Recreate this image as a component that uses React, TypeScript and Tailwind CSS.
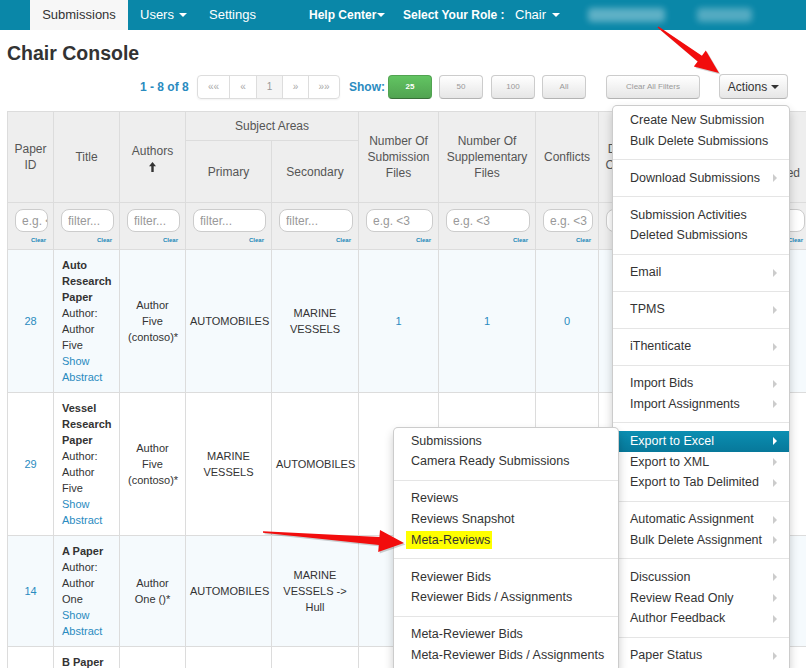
import React from 'react';

type Entry = { label: string; sub?: boolean; active?: boolean } | 'divider';

const actionsMenu: Entry[] = [
  { label: 'Create New Submission' },
  { label: 'Bulk Delete Submissions' },
  'divider',
  { label: 'Download Submissions', sub: true },
  'divider',
  { label: 'Submission Activities' },
  { label: 'Deleted Submissions' },
  'divider',
  { label: 'Email', sub: true },
  'divider',
  { label: 'TPMS', sub: true },
  'divider',
  { label: 'iThenticate', sub: true },
  'divider',
  { label: 'Import Bids', sub: true },
  { label: 'Import Assignments', sub: true },
  'divider',
  { label: 'Export to Excel', sub: true, active: true },
  { label: 'Export to XML', sub: true },
  { label: 'Export to Tab Delimited', sub: true },
  'divider',
  { label: 'Automatic Assignment', sub: true },
  { label: 'Bulk Delete Assignment', sub: true },
  'divider',
  { label: 'Discussion', sub: true },
  { label: 'Review Read Only', sub: true },
  { label: 'Author Feedback', sub: true },
  'divider',
  { label: 'Paper Status', sub: true },
];

const excelMenu: string[] = [
  'Submissions',
  'Camera Ready Submissions',
  'divider',
  'Reviews',
  'Reviews Snapshot',
  'Meta-Reviews',
  'divider',
  'Reviewer Bids',
  'Reviewer Bids / Assignments',
  'divider',
  'Meta-Reviewer Bids',
  'Meta-Reviewer Bids / Assignments',
];

const papers = [
  { id: 28, title: 'Auto Research Paper', author: 'Author Five', authors: 'Author Five (contoso)*', primary: 'AUTOMOBILES', secondary: 'MARINE VESSELS', bg: 'bg-[#f5fafd]' },
  { id: 29, title: 'Vessel Research Paper', author: 'Author Five', authors: 'Author Five (contoso)*', primary: 'MARINE VESSELS', secondary: 'AUTOMOBILES', bg: 'bg-white' },
  { id: 14, title: 'A Paper', author: 'Author One', authors: 'Author One ()*', primary: 'AUTOMOBILES', secondary: 'MARINE VESSELS -> Hull', bg: 'bg-[#f5fafd]' },
  { id: 15, title: 'B Paper', author: 'Author Two', authors: 'Author Two ()*', primary: 'AUTOMOBILES', secondary: 'MARINE VESSELS', bg: 'bg-white' },
];

const Divider = () => <div className="my-[7.65px] h-px bg-[#e5e5e5]" />;

const Th = ({ children, rowSpan, colSpan }: { children: React.ReactNode; rowSpan?: number; colSpan?: number }) => (
  <th rowSpan={rowSpan} colSpan={colSpan} className="border border-[#dcdcdc] bg-[#eeeeee] px-[4px] text-center align-middle text-[12px] font-normal leading-[16px] text-[#555]">
    {children}
  </th>
);

const FilterCell = ({ ph }: { ph: string }) => (
  <td className="border border-[#dcdcdc] bg-[#eeeeee] pl-[7px] pr-[5px] pt-[6px] pb-[2px] align-top">
    <input
      readOnly
      placeholder={ph}
      className="block h-[23px] w-full rounded-[8px] border border-[#cccccc] bg-white pl-[6px] text-[12px] outline-none placeholder:text-[#999]"
    />
    <div className="mt-[3px] pr-[2px] text-right text-[6px] font-bold leading-[10px] text-[#1b88b8]">Clear</div>
  </td>
);

function Nav() {
  return (
    <div className="flex h-[30px] items-stretch bg-[#0a87a8] text-[13px] text-white">
      <div className="w-[30px]" />
      <div className="flex w-[98px] items-center justify-center bg-[#f7f7f7] text-[#333]">Submissions</div>
      <div className="flex w-[81px] items-center pl-[12px]">
        Users
        <span className="ml-[5px] h-0 w-0 border-x-[4px] border-t-[4px] border-x-transparent border-t-white" />
      </div>
      <div className="flex w-[100px] items-center">Settings</div>
      <div className="flex w-[94px] items-center text-[12px] font-bold">
        Help Center
        <span className="ml-[1px] h-0 w-0 border-x-[4px] border-t-[4px] border-x-transparent border-t-white" />
      </div>
      <div className="flex w-[112px] items-center text-[12px] font-bold">Select Your Role :</div>
      <div className="flex w-[73px] items-center">
        Chair
        <span className="ml-[6px] h-0 w-0 border-x-[4px] border-t-[4px] border-x-transparent border-t-white" />
      </div>
      <div className="flex items-center">
        <div className="h-[14px] w-[77px] rounded bg-white/35 blur-[3px]" />
        <div className="ml-[32px] h-[14px] w-[55px] rounded bg-white/30 blur-[3px]" />
      </div>
    </div>
  );
}

function Controls() {
  const grayBtn = 'flex h-[24px] w-[44px] items-center justify-center rounded-[4px] border border-[#cccccc] border-b-[#b3b3b3] bg-linear-to-b from-white to-[#e6e6e6] text-[8px] text-[#999]';
  return (
    <div className="mt-[11px] flex h-[25px] items-center pl-[140px]">
      <span className="w-[57px] text-[12px] font-bold text-[#2a8bbf]">1 - 8 of 8</span>
      <div className="flex h-[24px] overflow-hidden rounded-[4px] border border-[#dddddd] text-[10px] text-[#aaa] shadow-[0_1px_2px_rgba(0,0,0,0.05)]">
        <div className="flex w-[31px] items-center justify-center">««</div>
        <div className="flex w-[27px] items-center justify-center border-l border-[#dddddd]">«</div>
        <div className="flex w-[26px] items-center justify-center border-l border-[#dddddd] bg-[#f5f5f5] text-[#999]">1</div>
        <div className="flex w-[26px] items-center justify-center border-l border-[#dddddd]">»</div>
        <div className="flex w-[31px] items-center justify-center border-l border-[#dddddd]">»»</div>
      </div>
      <span className="ml-[9px] w-[39px] text-[12px] font-bold text-[#2a8bbf]">Show:</span>
      <div className="flex h-[24px] w-[44px] items-center justify-center rounded-[4px] border border-[#51a351] border-b-[#387038] bg-linear-to-b from-[#62c462] to-[#51a351] text-[8px] font-bold text-white">25</div>
      <div className={`ml-[7px] ${grayBtn}`}>50</div>
      <div className={`ml-[8px] ${grayBtn}`}>100</div>
      <div className={`ml-[7px] ${grayBtn}`}>All</div>
      <div className="ml-[20px] flex h-[24px] w-[94px] items-center justify-center rounded-[4px] border border-[#cccccc] border-b-[#b3b3b3] bg-linear-to-b from-white to-[#e6e6e6] text-[8px] text-[#999]">
        Clear All Filters
      </div>
      <div className="ml-[19px] flex h-[25px] w-[69px] items-center justify-center rounded-[4px] border border-[#cccccc] border-b-[#b3b3b3] bg-linear-to-b from-white to-[#e6e6e6] text-[12px] text-[#333]">
        Actions
        <span className="ml-[4px] h-0 w-0 border-x-[4px] border-t-[4px] border-x-transparent border-t-[#333]" />
      </div>
    </div>
  );
}

function PaperTable() {
  const td = 'border border-[#dcdcdc] px-[8px] py-[7px] align-middle text-center';
  const tdWide = 'border border-[#dcdcdc] px-[4px] py-[7px] align-middle text-center';
  return (
    <div className="mt-[12px] pl-[7px]">
      <table className="w-[803px] table-fixed border-collapse text-[11px] leading-[16px] text-[#333]">
        <colgroup>
          <col className="w-[46px]" />
          <col className="w-[66px]" />
          <col className="w-[66px]" />
          <col className="w-[86px]" />
          <col className="w-[87px]" />
          <col className="w-[80px]" />
          <col className="w-[97px]" />
          <col className="w-[63px]" />
          <col className="w-[60px]" />
          <col className="w-[77px]" />
          <col className="w-[75px]" />
        </colgroup>
        <thead>
          <tr className="h-[29px]">
            <Th rowSpan={2}>Paper ID</Th>
            <Th rowSpan={2}>Title</Th>
            <Th rowSpan={2}>
              Authors
              <svg width="7" height="10" viewBox="0 0 7 10" className="mx-auto mt-[3px] block">
                <path d="M3.5 0 L7 4.2 L4.7 4.2 L4.7 10 L2.3 10 L2.3 4.2 L0 4.2 Z" fill="#333" />
              </svg>
            </Th>
            <Th colSpan={2}>Subject Areas</Th>
            <Th rowSpan={2}>Number Of Submission Files</Th>
            <Th rowSpan={2}>Number Of Supplementary Files</Th>
            <Th rowSpan={2}>Conflicts</Th>
            <Th rowSpan={2}>Domain Conflicts</Th>
            <Th rowSpan={2}>Number Of Reviewers Assigned</Th>
            <Th rowSpan={2}>
              Final
              <br />
              Paper
              <br />
              Submitted
            </Th>
          </tr>
          <tr className="h-[62px]">
            <Th>Primary</Th>
            <Th>Secondary</Th>
          </tr>
          <tr className="h-[47px]">
            <FilterCell ph="e.g. <3" />
            <FilterCell ph="filter..." />
            <FilterCell ph="filter..." />
            <FilterCell ph="filter..." />
            <FilterCell ph="filter..." />
            <FilterCell ph="e.g. <3" />
            <FilterCell ph="e.g. <3" />
            <FilterCell ph="e.g. <3" />
            <FilterCell ph="e.g. <3" />
            <FilterCell ph="e.g. <3" />
            <FilterCell ph="e.g. <3" />
          </tr>
        </thead>
        <tbody>
          {papers.map((p) => (
            <tr key={p.id} className={p.bg}>
              <td className={`${td} text-[#2a8bbf]`}>{p.id}</td>
              <td className="border border-[#dcdcdc] px-[8px] py-[7px] text-left align-middle">
                <div className="font-bold">{p.title}</div>
                <div>Author: {p.author}</div>
                <div className="text-[#2a8bbf]">Show Abstract</div>
              </td>
              <td className={td}>{p.authors}</td>
              <td className={tdWide}>{p.primary}</td>
              <td className={tdWide}>{p.secondary}</td>
              <td className={`${td} text-[#2a8bbf]`}>1</td>
              <td className={`${td} text-[#2a8bbf]`}>1</td>
              <td className={`${td} text-[#2a8bbf]`}>0</td>
              <td className={`${td} text-[#2a8bbf]`}>0</td>
              <td className={`${td} text-[#2a8bbf]`}>0</td>
              <td className={`${td} text-[#2a8bbf]`}>No</td>
            </tr>
          ))}
        </tbody>
      </table>
    </div>
  );
}

function ActionsMenu() {
  return (
    <div className="absolute left-[612px] top-[105px] z-20 w-[178px] rounded-[5px] border border-[rgba(0,0,0,0.2)] bg-white pt-[4px] pb-[5px] text-[12.5px] shadow-[0_5px_10px_rgba(0,0,0,0.2)]">
      {actionsMenu.map((e, i) =>
        e === 'divider' ? (
          <Divider key={i} />
        ) : (
          <div
            key={i}
            className={`flex h-[20.7px] items-center justify-between pl-[17px] pr-[12px] ${
              e.active ? 'bg-linear-to-b from-[#0b8fb2] to-[#07789a] text-white' : 'text-[#333]'
            }`}
          >
            <span className="whitespace-nowrap">{e.label}</span>
            {e.sub && (
              <span
                className={`h-0 w-0 border-y-[4px] border-l-[4px] border-y-transparent ${
                  e.active ? 'border-l-white' : 'border-l-[#cccccc]'
                }`}
              />
            )}
          </div>
        )
      )}
    </div>
  );
}

function ExcelMenu() {
  return (
    <div className="absolute left-[393px] top-[426.7px] z-30 w-[226px] rounded-[5px] border border-[rgba(0,0,0,0.2)] bg-white pt-[3px] pb-[5px] text-[12.5px] text-[#333] shadow-[0_5px_10px_rgba(0,0,0,0.2)]">
      {excelMenu.map((label, i) =>
        label === 'divider' ? (
          <Divider key={i} />
        ) : (
          <div key={i} className="flex h-[20.7px] items-center pl-[17px]">
            {label === 'Meta-Reviews' ? (
              <span className="-ml-[5px] bg-[#ffff00] pl-[5px] pr-[2px] leading-[18px]">{label}</span>
            ) : (
              <span className="whitespace-nowrap">{label}</span>
            )}
          </div>
        )
      )}
    </div>
  );
}

function Arrows() {
  return (
    <svg className="pointer-events-none absolute left-0 top-0 z-40" width="806" height="668" viewBox="0 0 806 668">
      <g fill="rgba(0,0,0,0.18)" transform="translate(1.5,1.5)">
        <polygon points="657.5,27.6 697.7,61.4 693.8,66.6 719,73 705.8,50.6 701.9,55.8 658.5,26.4" />
        <polygon points="263,532.8 378.8,545 378.2,552 404,543 380,530.1 379.4,537.1 263,531.2" />
      </g>
      <g fill="#f20d0d">
        <polygon points="657.5,27.6 697.7,61.4 693.8,66.6 719,73 705.8,50.6 701.9,55.8 658.5,26.4" />
        <polygon points="263,532.8 378.8,545 378.2,552 404,543 380,530.1 379.4,537.1 263,531.2" />
      </g>
    </svg>
  );
}

export default function App() {
  return (
    <div className="relative h-[668px] w-[806px] overflow-hidden bg-white font-['Liberation_Sans',Arial,sans-serif] text-[#333]">
      <Nav />
      <h1 className="ml-[7px] mt-[13px] text-[19.5px] font-bold leading-[20px] text-[#333]">Chair Console</h1>
      <Controls />
      <PaperTable />
      <ActionsMenu />
      <ExcelMenu />
      <Arrows />
    </div>
  );
}
